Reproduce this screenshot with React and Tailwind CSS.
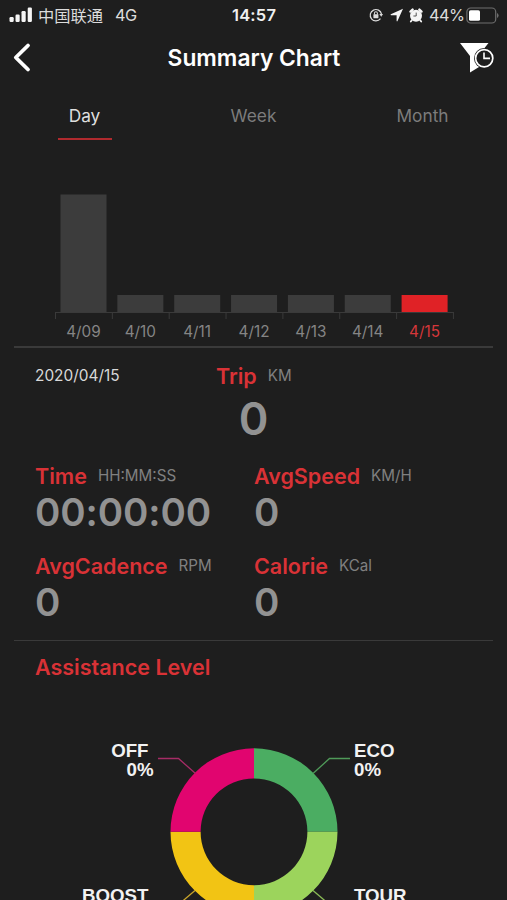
import clsx from 'clsx';

const tabs = ['Day', 'Week', 'Month'];

const days = [
  { label: '4/09', value: 118 },
  { label: '4/10', value: 17.5 },
  { label: '4/11', value: 17.5 },
  { label: '4/12', value: 17.5 },
  { label: '4/13', value: 17.5 },
  { label: '4/14', value: 17.5 },
  { label: '4/15', value: 17.5, active: true },
];

const StatusBar = () => (
  <div className="h-[30px] flex items-center justify-between pl-[9px] pr-2 text-[#dcdcdc]">
    <div className="w-[223px] flex items-center">
      <svg width="24" height="16" viewBox="0 0 24 16" fill="#f5f5f5">
        <rect x="0.5" y="10" width="4.2" height="5" rx="1.2" />
        <rect x="6.5" y="7.5" width="4.2" height="7.5" rx="1.2" />
        <rect x="12.5" y="4" width="4.2" height="11" rx="1.2" />
        <rect x="18.7" y="0.5" width="4.2" height="14.5" rx="1.2" />
      </svg>
      <span className="ml-[5px] w-[77px] text-[16.3px] leading-[30px] font-['Noto_Sans_CJK_SC',sans-serif]">中国联通</span>
      <span className="text-[16.3px] tracking-[-0.4px]">4G</span>
    </div>
    <span className="flex-1 text-[16.5px] font-semibold tracking-[0.2px] text-[#f0f0f0]">14:57</span>
    <div className="flex items-center">
      {/* rotation lock */}
      <svg width="14" height="14" viewBox="0 0 15 15" fill="none" stroke="#dcdcdc" strokeWidth="1.3">
        <path d="M12.3 11.4A6.1 6.1 0 1 1 13.4 6.6" />
        <path d="M11.1 6.4h4l-2 3z" fill="#dcdcdc" stroke="none" />
        <rect x="4.7" y="6.8" width="5.4" height="4.2" rx="0.5" fill="#dcdcdc" stroke="none" />
        <path d="M5.8 7V5.6a1.6 1.6 0 0 1 3.2 0V7" strokeWidth="1.1" />
      </svg>
      {/* location */}
      <svg className="ml-[7px]" width="14" height="14" viewBox="0 0 14 14" fill="#f5f5f5">
        <path d="M13 0.8L0.8 6.2q-0.6 0.7 0.2 1H6.6v5.8q0.4 0.8 0.9 0.1z" />
      </svg>
      {/* alarm */}
      <svg className="ml-[5px]" width="14" height="15" viewBox="0 0 14 15">
        <circle cx="7" cy="7.8" r="6" fill="#f5f5f5" />
        <path d="M1.5 3.6L3.6 1.6M12.5 3.6L10.4 1.6" stroke="#f5f5f5" strokeWidth="2.4" strokeLinecap="round" />
        <path d="M2.8 12.2L1.8 13.6M11.2 12.2L12.2 13.6" stroke="#f5f5f5" strokeWidth="1.8" strokeLinecap="round" />
        <path d="M7.2 4.6V8H4.4" stroke="#444" strokeWidth="0.9" fill="none" />
      </svg>
      <span className="ml-[6px] w-[37px] text-[16.3px] tracking-[-0.5px]">44%</span>
      <svg width="33" height="17" viewBox="0 0 33 17">
        <rect x="0.9" y="1" width="28.8" height="15" rx="3.8" fill="none" stroke="#6e6e6e" strokeWidth="1.2" />
        <rect x="3" y="3.2" width="11" height="10.6" rx="1.6" fill="#fff" />
        <path d="M31 6v5q1.6-0.8 1.6-2.5T31 6z" fill="#6e6e6e" />
      </svg>
    </div>
  </div>
);

const NavBar = () => (
  <div className="h-14 flex items-center justify-between pl-3 pr-3">
    <svg width="34" height="32" viewBox="0 0 34 32" fill="none">
      <path d="M16 3.5L3.8 15.5L16 27.5" stroke="#fff" strokeWidth="3.8" strokeLinecap="round" strokeLinejoin="round" />
    </svg>
    <h1 className="ml-[3px] text-[22.8px] font-semibold text-white">Summary Chart</h1>
    <svg width="36" height="32" viewBox="0 0 36 32">
      <path d="M1 1H29.5L20 13V25L11 30.5V14Z" fill="#fff" />
      <circle cx="25.2" cy="16.2" r="10.2" fill="#1e1e1e" />
      <circle cx="25.2" cy="16.2" r="8.6" fill="#1e1e1e" stroke="#fff" strokeWidth="1.7" />
      <path d="M25 10.5V16.4H31" fill="none" stroke="#fff" strokeWidth="1.6" />
    </svg>
  </div>
);

const TabBar = () => (
  <div className="h-[60px] grid grid-cols-3">
    {tabs.map((tab, i) => (
      <div key={tab} className="flex flex-col items-center pt-[17px]">
        <span className={clsx('h-[26px] leading-[26px] text-[17.3px]', i === 0 ? 'text-[#dedede]' : 'text-[#7c7c7c]')}>{tab}</span>
        {i === 0 && <span className="mt-[9px] h-[1.5px] w-[54px] bg-[#b02a2e]" />}
      </div>
    ))}
  </div>
);

const BarChart = () => (
  <div className="h-[200px] pt-[44px] pl-[55px]">
    <svg className="block" width="400" height="130" viewBox="0 0 400 130">
      {days.map((d, i) => (
        <rect key={d.label} x={5.5 + i * 56.85} y={122.5 - d.value} width="46" height={d.value} fill={d.active ? '#e02226' : '#3c3c3c'} />
      ))}
      <path d="M0 122.5H399" stroke="#3a3a3a" />
      {Array.from({ length: 8 }, (_, i) => (
        <path key={i} d={`M${0.5 + i * 56.85} 122.5V129`} stroke="#3a3a3a" />
      ))}
    </svg>
    <div className="w-[398px] grid grid-cols-7 text-center text-[15.3px] leading-[24px]">
      {days.map((d) => (
        <span key={d.label} className={d.active ? 'text-[#d5373a]' : 'text-[#858585]'}>{d.label}</span>
      ))}
    </div>
  </div>
);

const Stat = ({ label, unit, value }) => (
  <div className="h-[90px]">
    <div className="flex items-center leading-[30px]">
      <span className="text-[21.5px] font-semibold text-[#d93236]">{label}</span>
      <span className="ml-[11px] text-[15.2px] text-[#808080]">{unit}</span>
    </div>
    <div className="mt-px text-[38.5px] leading-[40px] font-semibold tracking-[-0.1px] text-[#929292]">{value}</div>
  </div>
);

const Donut = () => (
  <svg width="507" height="220" viewBox="0 680 507 220" className="block">
    <path d="M254 748.3A83.5 83.5 0 0 1 337.5 831.8H307.4A53.4 53.4 0 0 0 254 778.4Z" fill="#4bad62" />
    <path d="M337.5 831.8A83.5 83.5 0 0 1 254 915.3V885.2A53.4 53.4 0 0 0 307.4 831.8Z" fill="#9cd45c" />
    <path d="M254 915.3A83.5 83.5 0 0 1 170.5 831.8H200.6A53.4 53.4 0 0 0 254 885.2Z" fill="#f2c414" />
    <path d="M170.5 831.8A83.5 83.5 0 0 1 254 748.3V778.4A53.4 53.4 0 0 0 200.6 831.8Z" fill="#e1056f" />
    <g fill="none" strokeWidth="1.3">
      <path d="M158 758.5H178.5L195.5 773.5" stroke="#a62c66" />
      <path d="M350 758.5H329.5L313 773.5" stroke="#4f9a59" />
      <path d="M178 905L195 890.5" stroke="#c9a52b" />
      <path d="M330 905L313 890.5" stroke="#8abb55" />
    </g>
    <g className="font-['Liberation_Sans',sans-serif] font-bold text-[18.7px]" fill="#f2f2f2">
      <text x="148.5" y="756.5" textAnchor="end">OFF</text>
      <text x="153.5" y="775.5" textAnchor="end">0%</text>
      <text x="354" y="756.5">ECO</text>
      <text x="354" y="775.5">0%</text>
      <text x="148.5" y="902.3" textAnchor="end">BOOST</text>
      <text x="354" y="902.3">TOUR</text>
    </g>
  </svg>
);

const App = () => (
  <div className="w-[507px] h-[900px] overflow-hidden bg-[#1e1e1e] font-['Inter',sans-serif]">
    <StatusBar />
    <NavBar />
    <TabBar />
    <BarChart />
    <div className="mx-[14px] h-[1.5px] bg-[#3a3a3a]" />
    <div className="h-[113px] pt-[12px]">
      <div className="h-8 grid grid-cols-[181px_145px_181px] items-center">
        <span className="pl-[35px] text-[15.4px] leading-[30px] text-[#d8d8d8]">2020/04/15</span>
        <div className="flex items-center pl-[35px] leading-[30px]">
          <span className="text-[21.5px] font-semibold text-[#d93236]">Trip</span>
          <span className="ml-[11px] text-[15.2px] text-[#808080]">KM</span>
        </div>
      </div>
      <div className="text-center text-[45px] leading-[54px] font-semibold text-[#929292]">0</div>
    </div>
    <div className="h-[179px] grid grid-cols-[219px_1fr] pl-[35px]">
      <Stat label="Time" unit="HH:MM:SS" value="00:00:00" />
      <Stat label="AvgSpeed" unit="KM/H" value="0" />
      <Stat label="AvgCadence" unit="RPM" value="0" />
      <Stat label="Calorie" unit="KCal" value="0" />
    </div>
    <div className="mx-[14px] h-[1.5px] bg-[#3a3a3a]" />
    <h2 className="h-[39px] pl-[35px] pt-[11px] leading-[31px] text-[21.5px] font-semibold text-[#d93236]">Assistance Level</h2>
    <Donut />
  </div>
);

export default App;
